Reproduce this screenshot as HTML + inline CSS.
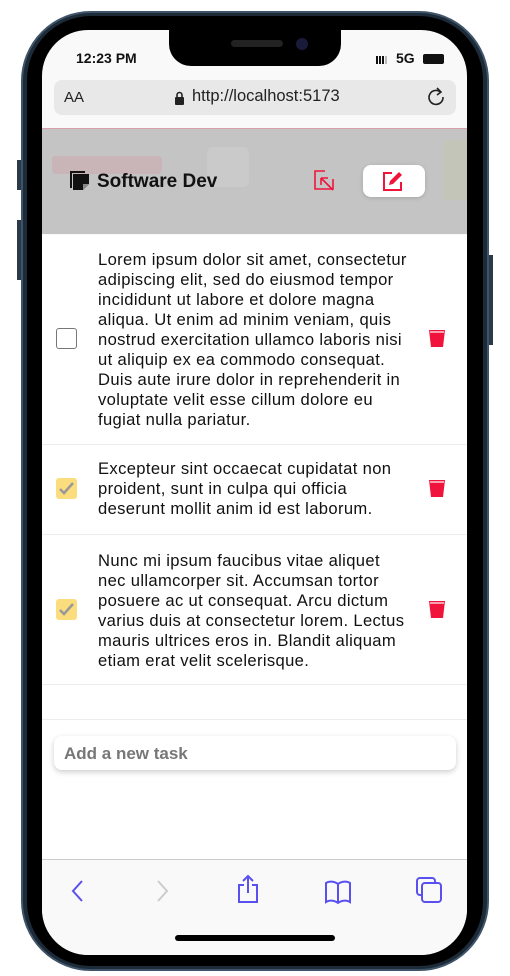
<!DOCTYPE html>
<html><head><meta charset="utf-8"><style>
*{margin:0;padding:0;box-sizing:border-box}
body{width:510px;height:976px;background:#fff;position:relative;overflow:hidden;font-family:"Liberation Sans",sans-serif}
.abs{position:absolute}
.frame{left:21px;top:11px;width:468px;height:960px;border-radius:70px;background:#1d2a38;border:2px solid #3f5468}
.bezel{left:27px;top:16px;width:456px;height:950px;border-radius:64px;background:#000}
.screen{left:42px;top:30px;width:425px;height:925px;border-radius:46px;background:#f9f9f9;overflow:hidden}
.notch{left:127px;top:0;width:172px;height:36px;background:#000;border-radius:0 0 22px 22px}
.t{white-space:nowrap;font-size:16.6px;letter-spacing:.35px;line-height:20px;color:#111}
.sep{left:0;width:425px;height:1px;background:#ececec}
.cb{width:21px;height:21px;border-radius:3px}
</style></head><body>
<div class="abs frame"></div>
<div class="abs" style="left:17px;top:160px;width:4px;height:30px;background:#2a3a4a"></div>
<div class="abs" style="left:17px;top:220px;width:4px;height:60px;background:#2a3a4a"></div>
<div class="abs" style="left:489px;top:255px;width:4px;height:90px;background:#2a3a4a"></div>
<div class="abs bezel"></div>
<div class="abs screen">
  <div class="abs notch"></div>
  <div class="abs" style="left:189px;top:10px;width:52px;height:7px;border-radius:4px;background:#222"></div>
  <div class="abs" style="left:254px;top:8px;width:12px;height:12px;border-radius:6px;background:#1a1a3a"></div>
  <div class="abs" style="left:34px;top:20px;font-size:14px;font-weight:bold;color:#111">12:23 PM</div>
  <div class="abs" style="left:334px;top:26px;width:12px;height:8px;background:linear-gradient(90deg,#111 0 2px,transparent 2px 3px,#111 3px 5px,transparent 5px 6px,#111 6px 8px,transparent 8px 9px,#bbb 9px 11px,transparent 11px)"></div>
  <div class="abs" style="left:354px;top:20px;font-size:14px;font-weight:bold;color:#111">5G</div>
  <div class="abs" style="left:381px;top:24px;width:21px;height:10px;border-radius:2px;background:#111"></div>
  <div class="abs" style="left:12px;top:50px;width:402px;height:35px;border-radius:8px;background:#e8e8e8"></div>
  <div class="abs" style="left:22px;top:59px;font-size:15px;color:#222">AA</div>
  <svg class="abs" style="left:132px;top:61px" width="11" height="14" viewBox="0 0 11 14"><rect x="1" y="6" width="9" height="8" rx="1" fill="#222"/><path d="M3 6V4a2.5 2.5 0 0 1 5 0v2" stroke="#222" stroke-width="1.6" fill="none"/></svg>
  <div class="abs" style="left:150px;top:57px;font-size:16.5px;color:#222">http://localhost:5173</div>
  <svg class="abs" style="left:385px;top:56px" width="20" height="22" viewBox="0 0 20 22"><path d="M14 6.5A7 7 0 1 0 16 11" stroke="#222" stroke-width="1.6" fill="none"/><path d="M10 2l4 4-4 3" stroke="#222" stroke-width="1.6" fill="none"/></svg>

  <div class="abs" style="left:0;top:98px;width:425px;height:106px;background:#c4c4c4;border-top:1px solid #d8a0a8"></div>
  <div class="abs" style="left:10px;top:126px;width:110px;height:18px;background:#c9b4b7;border-radius:4px"></div>
  <div class="abs" style="left:165px;top:117px;width:42px;height:40px;background:#cacaca;border-radius:6px"></div>
  <div class="abs" style="left:402px;top:110px;width:23px;height:60px;background:#c2c5b8"></div>
  <svg class="abs" style="left:27px;top:140px" width="22" height="22" viewBox="0 0 22 22"><path d="M1 1h15v2H3v15H1z" fill="#111"/><path d="M4 4h16v10l-6 6H4z" fill="#111"/><path d="M14 20v-6h6" fill="#888"/></svg>
  <div class="abs" style="left:55px;top:141px;font-size:19px;font-weight:bold;color:#111">Software Dev</div>
  <svg class="abs" style="left:272px;top:140px" width="22" height="22" viewBox="0 0 22 22"><path d="M11 1H1v18h18V9" stroke="#f0143c" stroke-width="1.6" fill="none"/><path d="M19 20L7 8M7 8v7M7 8h7" stroke="#f0143c" stroke-width="1.6" fill="none"/></svg>
  <div class="abs" style="left:321px;top:135px;width:62px;height:32px;background:#fff;border-radius:8px;box-shadow:0 1px 4px rgba(0,0,0,.15)"></div>
  <svg class="abs" style="left:340px;top:140px" width="22" height="22" viewBox="0 0 22 22"><path d="M10 3H2v17h17v-8" stroke="#f0143c" stroke-width="2" fill="none"/><path d="M7 15l1-4 9-9 3 3-9 9z" fill="#f0143c"/></svg>

  <div class="abs" style="left:0;top:205px;width:425px;height:655px;background:#fff"></div>
  <div class="abs t" style="left:56px;top:220px">Lorem ipsum dolor sit amet, consectetur<br>adipiscing elit, sed do eiusmod tempor<br>incididunt ut labore et dolore magna<br>aliqua. Ut enim ad minim veniam, quis<br>nostrud exercitation ullamco laboris nisi<br>ut aliquip ex ea commodo consequat.<br>Duis aute irure dolor in reprehenderit in<br>voluptate velit esse cillum dolore eu<br>fugiat nulla pariatur.</div>
  <div class="abs cb" style="left:14px;top:298px;border:1.5px solid #777;background:#fff"></div>
  <div class="abs sep" style="top:414px"></div>
  <div class="abs t" style="left:56px;top:429px">Excepteur sint occaecat cupidatat non<br>proident, sunt in culpa qui officia<br>deserunt mollit anim id est laborum.</div>
  <div class="abs cb" style="left:14px;top:448px;background:#fbdd7e"></div>
  <svg class="abs" style="left:16px;top:451px" width="17" height="15" viewBox="0 0 17 15"><path d="M2 8l4 4 9-10" stroke="#999" stroke-width="2.5" fill="none"/></svg>
  <div class="abs sep" style="top:504px"></div>
  <div class="abs t" style="left:56px;top:521px">Nunc mi ipsum faucibus vitae aliquet<br>nec ullamcorper sit. Accumsan tortor<br>posuere ac ut consequat. Arcu dictum<br>varius duis at consectetur lorem. Lectus<br>mauris ultrices eros in. Blandit aliquam<br>etiam erat velit scelerisque.</div>
  <div class="abs cb" style="left:14px;top:569px;background:#fbdd7e"></div>
  <svg class="abs" style="left:16px;top:572px" width="17" height="15" viewBox="0 0 17 15"><path d="M2 8l4 4 9-10" stroke="#999" stroke-width="2.5" fill="none"/></svg>
  <div class="abs sep" style="top:654px"></div>
  <div class="abs sep" style="top:689px"></div>
  <svg class="abs" style="left:386px;top:298px" width="18" height="20" viewBox="0 0 18 20"><path d="M1 2h16l-2 17H3z" fill="#f0143c"/><path d="M2 4h14" stroke="#fff" stroke-width="1.2"/></svg>
  <svg class="abs" style="left:386px;top:448px" width="18" height="20" viewBox="0 0 18 20"><path d="M1 2h16l-2 17H3z" fill="#f0143c"/><path d="M2 4h14" stroke="#fff" stroke-width="1.2"/></svg>
  <svg class="abs" style="left:386px;top:569px" width="18" height="20" viewBox="0 0 18 20"><path d="M1 2h16l-2 17H3z" fill="#f0143c"/><path d="M2 4h14" stroke="#fff" stroke-width="1.2"/></svg>
  <div class="abs" style="left:12px;top:706px;width:402px;height:34px;background:#fff;border-radius:8px;box-shadow:0 2px 6px rgba(0,0,0,.2)"></div>
  <div class="abs" style="left:22px;top:714px;font-size:17px;font-weight:bold;color:#777">Add a new task</div>

  <div class="abs" style="left:0;top:829px;width:425px;height:96px;background:#f9f9f9;border-top:1px solid #ccc"></div>
  <svg class="abs" style="left:28px;top:849px" width="16" height="24" viewBox="0 0 16 24"><path d="M12 2L3 12l9 10" stroke="#5a50f0" stroke-width="2" fill="none"/></svg>
  <svg class="abs" style="left:112px;top:849px" width="16" height="24" viewBox="0 0 16 24"><path d="M4 2l9 10-9 10" stroke="#ccc" stroke-width="2" fill="none"/></svg>
  <svg class="abs" style="left:194px;top:844px" width="24" height="30" viewBox="0 0 24 30"><path d="M8 11H3v17h18V11h-5" stroke="#5a50f0" stroke-width="2" fill="none"/><path d="M12 19V2M7 7l5-5 5 5" stroke="#5a50f0" stroke-width="2" fill="none"/></svg>
  <svg class="abs" style="left:282px;top:850px" width="28" height="24" viewBox="0 0 28 24"><path d="M14 4C10 1 5 1 2 3v19c3-2 8-2 12 1 4-3 9-3 12-1V3c-3-2-8-2-12 1zM14 4v19" stroke="#5a50f0" stroke-width="2" fill="none"/></svg>
  <svg class="abs" style="left:374px;top:847px" width="26" height="26" viewBox="0 0 26 26"><rect x="1" y="1" width="18" height="17" rx="3" stroke="#5a50f0" stroke-width="2" fill="none"/><rect x="6" y="6" width="19" height="19" rx="3" stroke="#5a50f0" stroke-width="2" fill="#f9f9f9"/></svg>
  <div class="abs" style="left:133px;top:905px;width:160px;height:6px;border-radius:3px;background:#000"></div>
</div>
</body></html>
